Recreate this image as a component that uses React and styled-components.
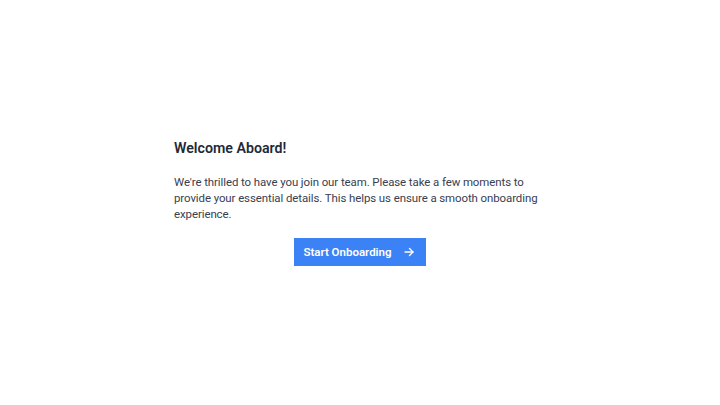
import React from "react";
import styled, { createGlobalStyle } from "styled-components";

const Global = createGlobalStyle`
  html, body { margin: 0; padding: 0; background: #ffffff; }
  body { font-family: Roboto, "Liberation Sans", sans-serif; }
`;

const Page = styled.main`
  height: 405px;
  display: flex;
  align-items: center;
  justify-content: center;
`;

const Card = styled.section`
  width: 372px;
  display: flex;
  flex-direction: column;
`;

const Title = styled.h1`
  margin: 0 0 17px;
  font-size: 14.2px;
  line-height: 18px;
  font-weight: 600;
  color: #1f2937;
`;

const Text = styled.p`
  margin: 0 0 16px;
  font-size: 11.45px;
  letter-spacing: -0.08px;
  line-height: 16px;
  color: #374151;
`;

const Button = styled.button`
  align-self: center;
  height: 28px;
  width: 132px;
  display: flex;
  align-items: center;
  justify-content: center;
  gap: 11px;
  padding: 0 2px 0 0;
  border: none;
  background: #3b82f6;
  color: #fff;
  font-family: inherit;
  font-size: 11.5px;
  font-weight: 600;
  white-space: nowrap;
  cursor: pointer;
`;

const Arrow = () => (
  <svg width="12" height="12" viewBox="0 0 24 24" fill="none" stroke="currentColor" strokeWidth="2.6" strokeLinecap="round" strokeLinejoin="round">
    <path d="M4 12h16" />
    <path d="M13 5l7 7-7 7" />
  </svg>
);

export default function App() {
  return (
    <>
      <Global />
      <Page>
        <Card>
          <Title>Welcome Aboard!</Title>
          <Text>
            We're thrilled to have you join our team. Please take a few moments to provide your essential details. This helps us ensure a smooth onboarding experience.
          </Text>
          <Button>
            Start Onboarding <Arrow />
          </Button>
        </Card>
      </Page>
    </>
  );
}
